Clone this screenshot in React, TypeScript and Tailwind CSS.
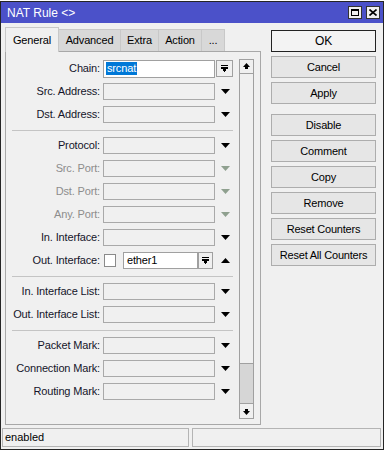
import type { ReactNode } from "react"

const font = { fontFamily: '"Liberation Sans", Arial, sans-serif' }

function DownArrow({ grey = false }: { grey?: boolean }) {
  return (
    <svg width="9" height="5" viewBox="0 0 9 5">
      <path d="M0 0H9L4.5 5Z" fill={grey ? "#8fa08f" : "#000"} />
    </svg>
  )
}

function UpArrow() {
  return (
    <svg width="9" height="5" viewBox="0 0 9 5">
      <path d="M0 5H9L4.5 0Z" fill="#000" />
    </svg>
  )
}

// drop-down button with bar + triangle
function ComboButton({ w = "w-[17px]" }: { w?: string }) {
  return (
    <div className={`${w} h-[17px] border border-[#a0a0a0] bg-[#f0f0f0] flex items-center justify-center`}>
      <svg width="9" height="9" viewBox="0 0 9 9">
        <rect x="1" y="1" width="7" height="1" fill="#000" />
        <path d="M1 3H8V5H6V7H5V8H4V7H3V5H1Z" fill="#000" />
      </svg>
    </div>
  )
}

function Row({
  label,
  disabled = false,
  children,
}: {
  label: string
  disabled?: boolean
  children?: ReactNode
}) {
  return (
    <div className="h-[23px] flex items-center">
      <div
        className={`w-[94px] text-right text-[11px] tracking-[-0.15px] whitespace-nowrap ${
          disabled ? "text-[#8d8d8d]" : "text-[#15152a]"
        }`}
      >
        {label}
      </div>
      {children ?? (
        <>
          <div className="ml-[3px] w-[112px] h-[17px] border border-[#a9a9a9] bg-[#f0f0f0]" />
          <div className="ml-[1px] w-[17px] flex justify-center pl-[2px]">
            <DownArrow grey={disabled} />
          </div>
        </>
      )}
    </div>
  )
}

function Sep() {
  return (
    <div className="h-[8px] flex items-center">
      <div className="ml-[6px] w-[221px] h-px bg-[#c4c4c4]" />
    </div>
  )
}

function Btn({ children, primary = false }: { children: ReactNode; primary?: boolean }) {
  return (
    <div
      className={`h-[22px] w-[105px] flex items-center justify-center text-[11px] tracking-[-0.2px] text-black ${
        primary ? "border border-[#222] bg-[#f3f3f3] text-[12px]" : "border border-[#adadad] bg-[#e6e6e6]"
      }`}
    >
      {children}
    </div>
  )
}

export default function App() {
  return (
    <div className="w-[385px] h-[451px] bg-white pt-[1px]" style={font}>
      <div className="w-[384px] h-[449px] border border-[#252525] bg-[#f0f0f0] flex flex-col">
        {/* title bar */}
        <div className="h-[21px] bg-[#4b51c9] flex items-center pl-[6px] pr-[3px]">
          <span className="text-white text-[12px]">NAT Rule &lt;&gt;</span>
          <div className="ml-auto flex gap-[4px]">
            <div className="w-[14px] h-[13px] bg-[#f0f0f0] border border-[#333] flex items-center justify-center">
              <div className="w-[8px] h-[7px] border border-black border-t-2" />
            </div>
            <div className="w-[14px] h-[13px] bg-[#f0f0f0] border border-[#333] flex items-center justify-center">
              <svg width="8" height="7" viewBox="0 0 8 7">
                <path d="M0.5 0.5L7.5 6.5M7.5 0.5L0.5 6.5" stroke="#000" strokeWidth="1.6" />
              </svg>
            </div>
          </div>
        </div>

        <div className="flex flex-1 pl-[4px]">
          {/* left: tabs + panel */}
          <div className="w-[256px] flex flex-col">
            <div className="h-[28px] pt-[4px] flex items-end text-[11px] tracking-[-0.15px] text-black relative z-10">
              <div className="w-[54px] h-[25px] -mb-px bg-[#f0f0f0] border border-b-0 border-[#c8c8c8] flex items-center justify-center">
                General
              </div>
              <div className="w-[62px] h-[22px] bg-[#d8d8d8] border-t border-r border-[#c8c8c8] flex items-center justify-center">
                Advanced
              </div>
              <div className="w-[38px] h-[22px] bg-[#d8d8d8] border-t border-r border-[#c8c8c8] flex items-center justify-center">
                Extra
              </div>
              <div className="w-[43px] h-[22px] bg-[#d8d8d8] border-t border-r border-[#c8c8c8] flex items-center justify-center">
                Action
              </div>
              <div className="w-[23px] h-[22px] bg-[#d8d8d8] border-t border-r border-[#c8c8c8] flex items-center justify-center">
                ...
              </div>
            </div>

            <div className="h-[374px] border border-[#a8a8a8] flex">
              {/* form */}
              <div className="w-[227px] pt-[5px]">
                <Row label="Chain:">
                  <div className="ml-[3px] w-[112px] h-[18px] border border-[#a0a0a0] bg-white flex items-center pl-[2px]">
                    <span className="bg-[#0078d7] text-white text-[11px] tracking-[-0.15px] px-[1px] leading-[13px]">
                      srcnat
                    </span>
                  </div>
                  <div className="ml-[1px]">
                    <ComboButton />
                  </div>
                </Row>
                <Row label="Src. Address:" />
                <Row label="Dst. Address:" />
                <Sep />
                <Row label="Protocol:" />
                <Row label="Src. Port:" disabled />
                <Row label="Dst. Port:" disabled />
                <Row label="Any. Port:" disabled />
                <Row label="In. Interface:" />
                <Row label="Out. Interface:">
                  <div className="ml-[4px] w-[12px] h-[13px] border border-[#8a8a8a] bg-white" />
                  <div className="ml-[7px] w-[75px] h-[17px] border border-[#a0a0a0] bg-white flex items-center pl-[3px] text-[11px] tracking-[-0.15px] text-black">
                    ether1
                  </div>
                  <div>
                    <ComboButton w="w-[15px]" />
                  </div>
                  <div className="w-[20px] flex justify-end pr-[3px]">
                    <UpArrow />
                  </div>
                </Row>
                <Sep />
                <Row label="In. Interface List:" />
                <Row label="Out. Interface List:" />
                <Sep />
                <Row label="Packet Mark:" />
                <Row label="Connection Mark:" />
                <Row label="Routing Mark:" />
              </div>

              {/* scrollbar */}
              <div className="ml-[6px] mt-[7px] mb-[5px] w-[15px] border border-[#a0a0a0] flex flex-col bg-[#f0f0f0]">
                <div className="h-[14px] border-b border-[#a0a0a0] flex items-center justify-center">
                  <svg width="7" height="7" viewBox="0 0 7 7">
                    <path d="M3.5 0L7 4H5V6H2V4H0Z" fill="#000" />
                  </svg>
                </div>
                <div className="flex-1" />
                <div className="h-[41px] bg-[#d6d6d6] border-y border-[#a0a0a0]" />
                <div className="h-[14px] flex items-center justify-center">
                  <svg width="7" height="7" viewBox="0 0 7 7">
                    <path d="M3.5 7L7 3H5V1H2V3H0Z" fill="#000" />
                  </svg>
                </div>
              </div>
            </div>
          </div>

          {/* right: buttons */}
          <div className="ml-[10px] pt-[7px] flex flex-col gap-[4px]">
            <Btn primary>OK</Btn>
            <Btn>Cancel</Btn>
            <Btn>Apply</Btn>
            <div className="h-[6px]" />
            <div className="-mt-[4px] flex flex-col gap-[4px]">
              <Btn>Disable</Btn>
              <Btn>Comment</Btn>
              <Btn>Copy</Btn>
              <Btn>Remove</Btn>
              <Btn>Reset Counters</Btn>
              <Btn>Reset All Counters</Btn>
            </div>
          </div>
        </div>

        {/* status bar */}
        <div className="h-[23px] pt-[2px] pb-[2px] pl-[1px] flex gap-[3px]">
          <div className="w-[187px] border border-[#b4b4b4] flex items-center pl-[2px] text-[11px] text-black">
            enabled
          </div>
          <div className="w-[189px] border border-[#b4b4b4]" />
        </div>
      </div>
    </div>
  )
}
